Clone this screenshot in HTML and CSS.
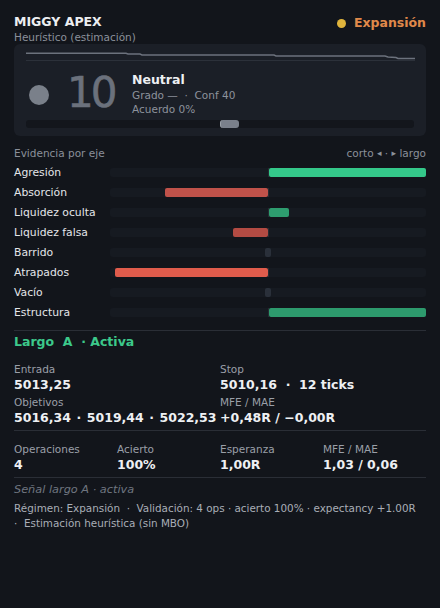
FILE: index.html
```html
<!DOCTYPE html>
<html lang="es">
<head>
  <meta charset="UTF-8">
  <title>Miggy Apex</title>
  <link rel="stylesheet" href="styles.css">
</head>
<body>

  <div class="head">
    <div>
      <div class="title">MIGGY APEX</div>
      <div class="sub">Heurístico (estimación)</div>
    </div>
    <div class="regime"><span class="dot"></span>Expansión</div>
  </div>

  <div class="card">
    <svg class="spark" viewBox="0 0 389 10" width="389" height="10">
      <line x1="0" y1="9.5" x2="389" y2="9.5" stroke="#2c313a" stroke-width="1"/>
      <polyline fill="none" stroke="#6c727d" stroke-width="1.4"
        points="0,2.3 100,2.3 102,3 114,3 116,4 248,4 250,5 359,5 362,6 370,6.5 372,7.5 389,7.5"/>
    </svg>
    <div class="score">
      <span class="ball"></span>
      <span class="num">10</span>
      <div class="info">
        <div class="state">Neutral</div>
        <div class="meta">Grado —&nbsp; · &nbsp;Conf 40</div>
        <div class="meta">Acuerdo 0%</div>
      </div>
    </div>
    <div class="gauge">
      <div class="gauge-half"></div>
      <span class="knob"></span>
      <div class="gauge-half"></div>
    </div>
  </div>

  <div class="ev-head">
    <span>Evidencia por eje</span>
    <span>corto <small>◂</small> · <small>▸</small> largo</span>
  </div>

  <div class="axes" id="axes"></div>

  <div class="rule"></div>

  <div class="signal">Largo&nbsp; A &nbsp;· Activa</div>

  <div class="trade">
    <div>
      <div class="lbl">Entrada</div>
      <div class="val">5013,25</div>
    </div>
    <div>
      <div class="lbl">Stop</div>
      <div class="val">5010,16 &nbsp;· &nbsp;12 ticks</div>
    </div>
    <div>
      <div class="lbl">Objetivos</div>
      <div class="val targets">5016,34 · 5019,44 · 5022,53</div>
    </div>
    <div>
      <div class="lbl">MFE / MAE</div>
      <div class="val">+0,48R / −0,00R</div>
    </div>
  </div>

  <div class="rule"></div>

  <div class="stats">
    <div>
      <div class="lbl">Operaciones</div>
      <div class="val">4</div>
    </div>
    <div>
      <div class="lbl">Acierto</div>
      <div class="val">100%</div>
    </div>
    <div>
      <div class="lbl">Esperanza</div>
      <div class="val">1,00R</div>
    </div>
    <div>
      <div class="lbl">MFE / MAE</div>
      <div class="val">1,03 / 0,06</div>
    </div>
  </div>

  <div class="rule"></div>

  <div class="note">Señal largo A · activa</div>
  <div class="foot">
    Régimen: Expansión &nbsp;· &nbsp;Validación: 4 ops · acierto 100% · expectancy +1.00R<br>
    · &nbsp;Estimación heurística (sin MBO)
  </div>

  <script>
    // value in -1..1, colour of the bar
    const axes = [
      ['Agresión', 1, '#34c88a'],
      ['Absorción', -0.65, '#c0524a'],
      ['Liquidez oculta', 0.13, '#2e9d6f'],
      ['Liquidez falsa', -0.22, '#b34b43'],
      ['Barrido', 0, null],
      ['Atrapados', -0.97, '#e05c4c'],
      ['Vacío', 0, null],
      ['Estructura', 1, '#2d9a6d']
    ];

    const axesBox = document.getElementById('axes');

    axes.forEach(([name, v, color]) => {
      const row = document.createElement('div');
      row.className = 'axis';

      const label = document.createElement('span');
      label.className = 'axis-name';
      label.innerText = name;

      const track = document.createElement('div');
      track.className = 'track';

      const left = document.createElement('div');
      left.className = 'half left';
      const right = document.createElement('div');
      right.className = 'half right';

      if (color) {
        const bar = document.createElement('div');
        bar.className = 'bar';
        bar.style.width = (Math.abs(v) * 100) + '%';
        bar.style.background = color;
        (v < 0 ? left : right).appendChild(bar);
      } else {
        const tick = document.createElement('div');
        tick.className = 'tick';
        track.appendChild(tick);
      }

      track.prepend(left);
      track.appendChild(right);
      row.appendChild(label);
      row.appendChild(track);
      axesBox.appendChild(row);
    });
  </script>

</body>
</html>
```

FILE: styles.css
```css
body {
  margin: 0;
  padding: 14px 14px 0;
  background: #12151b;
  color: #e6e8ec;
  font-family: "DejaVu Sans", "Noto Sans", sans-serif;
  width: 412px;
  height: 594px;
  overflow: hidden;
}

.head {
  display: flex;
  justify-content: space-between;
  align-items: flex-start;
}

.title {
  font-size: 12.5px;
  font-weight: bold;
  line-height: 16px;
  color: #eceef1;
}

.sub {
  font-size: 10.5px;
  line-height: 14px;
  color: #8b909a;
}

.regime {
  display: flex;
  align-items: center;
  gap: 8px;
  font-size: 12.5px;
  font-weight: bold;
  line-height: 16px;
  color: #e0894a;
  padding-top: 1px;
}

.dot {
  width: 9px;
  height: 9px;
  border-radius: 50%;
  background: #e0b43c;
}

.card {
  background: #1b1f27;
  border-radius: 6px;
  padding: 7px 12px 8px;
}

.spark {
  display: block;
}

.score {
  display: flex;
  align-items: center;
  margin-top: 11px;
  height: 44px;
}

.ball {
  width: 20px;
  height: 20px;
  border-radius: 50%;
  background: #7a808a;
  margin-left: 3px;
  margin-right: 18px;
  margin-top: 2px;
}

.num {
  font-size: 42px;
  line-height: 44px;
  color: #6b717c;
  width: 48px;
  letter-spacing: -3px;
  margin-right: 17px;
  margin-top: -2px;
  -webkit-text-stroke: 0.6px #6b717c;
}

.info .state {
  font-size: 12.5px;
  font-weight: bold;
  line-height: 16px;
  color: #eef0f3;
}

.info .meta {
  font-size: 10.5px;
  line-height: 14px;
  color: #8d929c;
}

.gauge {
  display: flex;
  height: 8px;
  margin-top: 4px;
  background: #13161c;
  border-radius: 3px;
}

.gauge-half {
  flex: 1;
}

.knob {
  width: 19px;
  margin-right: -19px;
  background: #7a808b;
  border-radius: 3px;
  border-left: 1px solid #9aa0a8;
  box-sizing: border-box;
}

.ev-head {
  display: flex;
  justify-content: space-between;
  margin-top: 10px;
  margin-bottom: 2px;
  font-size: 10.5px;
  line-height: 14px;
  color: #8b909a;
}

.ev-head small {
  font-size: 9px;
  vertical-align: 1px;
}

.axis {
  display: flex;
  align-items: center;
  height: 20px;
}

.axis-name {
  width: 96px;
  font-size: 10.8px;
  color: #e4e6ea;
}

.track {
  flex: 1;
  height: 9px;
  display: flex;
  position: relative;
}

.half {
  flex: 1;
  display: flex;
  background: #161a21;
}

.half.left {
  justify-content: flex-end;
  border-radius: 3px 0 0 3px;
  border-right: 1px solid #262b33;
}

.half.right {
  border-radius: 0 3px 3px 0;
}

.bar {
  height: 100%;
  border-radius: 2px;
}

.tick {
  position: absolute;
  left: 155px;
  top: 0;
  width: 6px;
  height: 9px;
  background: #2a303a;
  border-radius: 2px;
}

.rule {
  height: 1px;
  background: #2a2e36;
  margin-top: 8px;
}

.signal {
  font-size: 12.5px;
  font-weight: bold;
  line-height: 16px;
  color: #3cc98b;
  margin-top: 3px;
}

.trade {
  display: grid;
  grid-template-columns: 206px 206px;
  row-gap: 1px;
  margin-top: 12px;
}

.stats {
  display: grid;
  grid-template-columns: repeat(4, 103px);
  margin-top: 11px;
}

.lbl {
  font-size: 10.5px;
  line-height: 14px;
  color: #9a9fa8;
}

.val {
  font-size: 12.5px;
  font-weight: bold;
  line-height: 18px;
  color: #eef0f3;
  white-space: nowrap;
}

.val.targets {
  word-spacing: 1.2px;
}

.trade + .rule,
.stats + .rule {
  margin-top: 3px;
}

.note {
  font-size: 11.3px;
  font-style: italic;
  line-height: 15px;
  color: #6f7580;
  margin-top: 4px;
}

.foot {
  font-size: 10.4px;
  line-height: 15px;
  color: #a9aeb7;
  margin-top: 4px;
  white-space: nowrap;
}
```
